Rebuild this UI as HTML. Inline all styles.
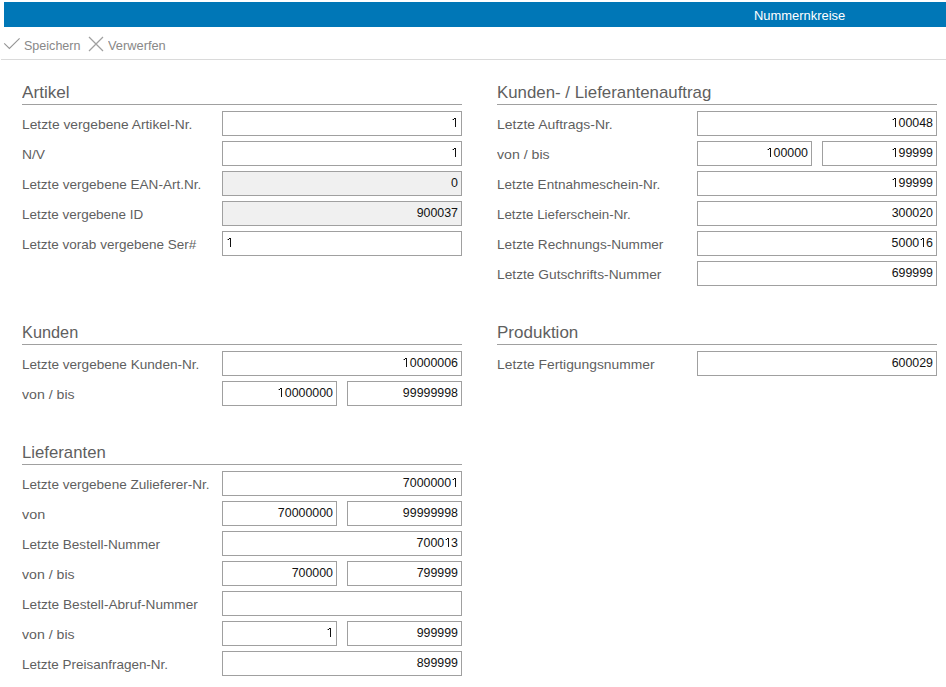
<!DOCTYPE html><html><head><meta charset="utf-8"><style>
*{margin:0;padding:0;box-sizing:border-box}
html,body{width:946px;height:687px;overflow:hidden;background:#fff;font-family:"Liberation Sans",sans-serif}
.a{position:absolute;white-space:nowrap;line-height:1;transform-origin:0 0}
.lb{font-size:13.2px;color:#5f5f5f}
.hd{font-size:15.7px;color:#5f5f5f}
.ul{position:absolute;height:1px;background:#a0a0a0}
.bx{position:absolute;height:25px;border:1px solid #a0a0a0;background:#fff}
.bx.d{background:#f0f0f0}
.v{position:absolute;font-size:12.4px;line-height:1;color:#111;white-space:nowrap}
.o{position:relative;color:transparent}
.o::before{content:'';position:absolute;left:3.6px;top:2.2px;width:1px;height:9px;background:#111}
.o::after{content:'';position:absolute;left:2.6px;top:2.2px;width:1px;height:1px;background:#000;box-shadow:-1px 1px 0 #000,-2px 1px 0 rgba(0,0,0,.35)}
</style></head><body>
<div class="a" style="left:4px;top:2px;width:942px;height:25px;background:#0077b7"></div>
<div class="a " style="left:754px;top:9.66px;transform:scaleX(1.0102);font-size:12.8px;color:#fff">Nummernkreise</div>
<svg class="a" style="left:0;top:32px" width="24" height="24" viewBox="0 32 24 24"><path d="M4.2 43.4 L9.4 48.5 L19.6 38.3" fill="none" stroke="#959595" stroke-width="1.1"/></svg>
<div class="a " style="left:24px;top:40.42px;transform:scaleX(1.0037);font-size:12.5px;color:#888">Speichern</div>
<svg class="a" style="left:84px;top:32px" width="24" height="24" viewBox="84 32 24 24"><path d="M89 37 L103 51 M103 37 L89 51" fill="none" stroke="#a0a0a0" stroke-width="1.25"/></svg>
<div class="a " style="left:108px;top:40.25px;transform:scaleX(1.0106);font-size:12.7px;color:#888">Verwerfen</div>
<div class="a" style="left:1px;top:59px;width:945px;height:1px;background:#dadada"></div>
<div class="a hd" style="left:22px;top:85.21px;transform:scaleX(1.0941);">Artikel</div>
<div class="ul" style="left:22px;top:104px;width:440px"></div>
<div class="a lb" style="left:22px;top:117.83px;transform:scaleX(1.0466);">Letzte vergebene Artikel-Nr.</div>
<div class="bx" style="left:222px;top:111px;width:240px"></div>
<div class="v" style="right:488px;top:117.30px"><span class="o">1</span></div>
<div class="a lb" style="left:22px;top:147.83px;transform:scaleX(1.0476);">N/V</div>
<div class="bx" style="left:222px;top:141px;width:240px"></div>
<div class="v" style="right:488px;top:147.30px"><span class="o">1</span></div>
<div class="a lb" style="left:22px;top:177.83px;transform:scaleX(1.0278);">Letzte vergebene EAN-Art.Nr.</div>
<div class="bx d" style="left:222px;top:171px;width:240px"></div>
<div class="v" style="right:488px;top:177.30px">0</div>
<div class="a lb" style="left:22px;top:207.83px;transform:scaleX(1.0212);">Letzte vergebene ID</div>
<div class="bx d" style="left:222px;top:201px;width:240px"></div>
<div class="v" style="right:488px;top:207.30px">900037</div>
<div class="a lb" style="left:22px;top:237.83px;transform:scaleX(1.0249);">Letzte vorab vergebene Ser#</div>
<div class="bx" style="left:222px;top:231px;width:240px"></div>
<div class="v" style="left:226px;top:237.30px"><span class="o">1</span></div>
<div class="a hd" style="left:497px;top:85.21px;transform:scaleX(1.0732);">Kunden- / Lieferantenauftrag</div>
<div class="ul" style="left:497px;top:104px;width:440px"></div>
<div class="a lb" style="left:497px;top:117.83px;transform:scaleX(1.0598);">Letzte Auftrags-Nr.</div>
<div class="bx" style="left:697px;top:111px;width:240px"></div>
<div class="v" style="right:13px;top:117.30px"><span class="o">1</span>00048</div>
<div class="a lb" style="left:497px;top:147.83px;transform:scaleX(1.0715);">von / bis</div>
<div class="bx" style="left:697px;top:141px;width:115px"></div>
<div class="bx" style="left:822px;top:141px;width:115px"></div>
<div class="v" style="right:138px;top:147.30px"><span class="o">1</span>00000</div>
<div class="v" style="right:13px;top:147.30px"><span class="o">1</span>99999</div>
<div class="a lb" style="left:497px;top:177.83px;transform:scaleX(1.0261);">Letzte Entnahmeschein-Nr.</div>
<div class="bx" style="left:697px;top:171px;width:240px"></div>
<div class="v" style="right:13px;top:177.30px"><span class="o">1</span>99999</div>
<div class="a lb" style="left:497px;top:207.83px;transform:scaleX(1.0139);">Letzte Lieferschein-Nr.</div>
<div class="bx" style="left:697px;top:201px;width:240px"></div>
<div class="v" style="right:13px;top:207.30px">300020</div>
<div class="a lb" style="left:497px;top:237.83px;transform:scaleX(1.0319);">Letzte Rechnungs-Nummer</div>
<div class="bx" style="left:697px;top:231px;width:240px"></div>
<div class="v" style="right:13px;top:237.30px">5000<span class="o">1</span>6</div>
<div class="a lb" style="left:497px;top:267.83px;transform:scaleX(1.0433);">Letzte Gutschrifts-Nummer</div>
<div class="bx" style="left:697px;top:261px;width:240px"></div>
<div class="v" style="right:13px;top:267.30px">699999</div>
<div class="a hd" style="left:22px;top:325.21px;transform:scaleX(1.0395);">Kunden</div>
<div class="ul" style="left:22px;top:344px;width:440px"></div>
<div class="a lb" style="left:22px;top:357.83px;transform:scaleX(1.0294);">Letzte vergebene Kunden-Nr.</div>
<div class="bx" style="left:222px;top:351px;width:240px"></div>
<div class="v" style="right:488px;top:357.30px"><span class="o">1</span>0000006</div>
<div class="a lb" style="left:22px;top:387.83px;transform:scaleX(1.0715);">von / bis</div>
<div class="bx" style="left:222px;top:381px;width:115px"></div>
<div class="bx" style="left:347px;top:381px;width:115px"></div>
<div class="v" style="right:613px;top:387.30px"><span class="o">1</span>0000000</div>
<div class="v" style="right:488px;top:387.30px">99999998</div>
<div class="a hd" style="left:497px;top:325.21px;transform:scaleX(1.0843);">Produktion</div>
<div class="ul" style="left:497px;top:344px;width:440px"></div>
<div class="a lb" style="left:497px;top:357.83px;transform:scaleX(1.0483);">Letzte Fertigungsnummer</div>
<div class="bx" style="left:697px;top:351px;width:240px"></div>
<div class="v" style="right:13px;top:357.30px">600029</div>
<div class="a hd" style="left:22px;top:445.21px;transform:scaleX(1.0669);">Lieferanten</div>
<div class="ul" style="left:22px;top:464px;width:440px"></div>
<div class="a lb" style="left:22px;top:477.83px;transform:scaleX(1.0276);">Letzte vergebene Zulieferer-Nr.</div>
<div class="bx" style="left:222px;top:471px;width:240px"></div>
<div class="v" style="right:488px;top:477.30px">7000000<span class="o">1</span></div>
<div class="a lb" style="left:22px;top:507.83px;transform:scaleX(1.0911);">von</div>
<div class="bx" style="left:222px;top:501px;width:115px"></div>
<div class="bx" style="left:347px;top:501px;width:115px"></div>
<div class="v" style="right:613px;top:507.30px">70000000</div>
<div class="v" style="right:488px;top:507.30px">99999998</div>
<div class="a lb" style="left:22px;top:537.83px;transform:scaleX(1.0293);">Letzte Bestell-Nummer</div>
<div class="bx" style="left:222px;top:531px;width:240px"></div>
<div class="v" style="right:488px;top:537.30px">7000<span class="o">1</span>3</div>
<div class="a lb" style="left:22px;top:567.83px;transform:scaleX(1.0715);">von / bis</div>
<div class="bx" style="left:222px;top:561px;width:115px"></div>
<div class="bx" style="left:347px;top:561px;width:115px"></div>
<div class="v" style="right:613px;top:567.30px">700000</div>
<div class="v" style="right:488px;top:567.30px">799999</div>
<div class="a lb" style="left:22px;top:597.83px;transform:scaleX(1.0343);">Letzte Bestell-Abruf-Nummer</div>
<div class="bx" style="left:222px;top:591px;width:240px"></div>
<div class="a lb" style="left:22px;top:627.83px;transform:scaleX(1.0715);">von / bis</div>
<div class="bx" style="left:222px;top:621px;width:115px"></div>
<div class="bx" style="left:347px;top:621px;width:115px"></div>
<div class="v" style="right:613px;top:627.30px"><span class="o">1</span></div>
<div class="v" style="right:488px;top:627.30px">999999</div>
<div class="a lb" style="left:22px;top:657.83px;transform:scaleX(1.0220);">Letzte Preisanfragen-Nr.</div>
<div class="bx" style="left:222px;top:651px;width:240px"></div>
<div class="v" style="right:488px;top:657.30px">899999</div>
</body></html>
